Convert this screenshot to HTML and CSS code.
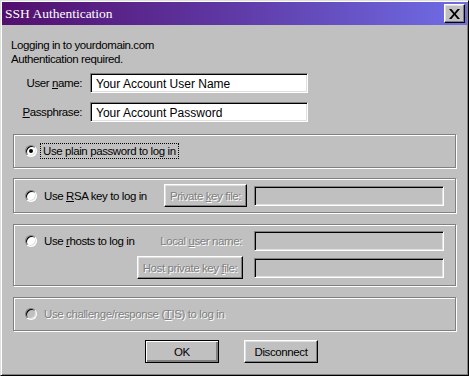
FILE: index.html
```html
<!DOCTYPE html>
<html>
<head>
  <title>SSH Authentication</title>
  <link rel="stylesheet" href="styles.css">
</head>
<body>
  <div class="window">
    <div class="titlebar">
      <span class="title">SSH Authentication</span>
      <button type="button" class="closeButton">
        <svg width="9" height="8" viewBox="0 0 9 8">
          <path d="M0 0h2l2.5 3 2.5-3h2L5.5 4 9 8H7L4.5 5 2 8H0l3.5-4z" fill="#000"/>
        </svg>
      </button>
    </div>

    <div class="content">
      <div class="intro">
        <div>Logging in to yourdomain.com</div>
        <div>Authentication required.</div>
      </div>

      <div class="fields">
        <label class="fieldLabel">User <u>n</u>ame:</label>
        <div class="textInput">Your Account User Name</div>
        <label class="fieldLabel"><u>P</u>assphrase:</label>
        <div class="textInput">Your Account Password</div>
      </div>

      <div class="groupBox single">
        <span class="radio checked"></span>
        <span class="optionLabel focused">Use plain password to log in</span>
      </div>

      <div class="groupBox grid">
        <div class="option">
          <span class="radio"></span>
          <span class="optionLabel">Use <u>R</u>SA key to log in</span>
        </div>
        <button type="button" class="winButton disabled keyButton">Private <u>k</u>ey file:</button>
        <div class="textInput empty"></div>
      </div>

      <div class="groupBox grid tall">
        <div class="option">
          <span class="radio"></span>
          <span class="optionLabel">Use <u>r</u>hosts to log in</span>
        </div>
        <span class="disabledText sideLabel">Local <u>u</u>ser name:</span>
        <div class="textInput empty"></div>
        <div></div>
        <button type="button" class="winButton disabled hostButton">Host private key <u>f</u>ile:</button>
        <div class="textInput empty"></div>
      </div>

      <div class="groupBox single">
        <span class="radio disabledRadio"></span>
        <span class="optionLabel disabledText">Use challenge/response (<u>T</u>IS) to log in</span>
      </div>

      <div class="actions">
        <button type="button" class="winButton default">OK</button>
        <button type="button" class="winButton">Disconnect</button>
      </div>
    </div>
  </div>
</body>
</html>
```

FILE: styles.css
```css
/* Win98 style dialog */
body {
  margin: 0;
  background-color: #c0c0c0;
  font-family: 'Liberation Sans', Arial, sans-serif;
  font-size: 11.5px;
  letter-spacing: -0.4px;
  color: #000;
}

.window {
  box-sizing: border-box;
  width: 469px;
  height: 376px;
  padding: 1px;
  background-color: #c0c0c0;
  border: 1px solid;
  border-color: #dfdfdf #000 #000 #dfdfdf;
  box-shadow: inset 1px 1px 0 #fff, inset -1px -1px 0 #808080;
}

.titlebar {
  display: flex;
  align-items: center;
  justify-content: space-between;
  height: 23px;
  padding: 0 2px 0 3px;
  background-image: linear-gradient(to right, #520f6d, #5e35a0 45%, #6f6de6);
}

.title {
  font-family: 'Liberation Serif', 'Times New Roman', serif;
  font-size: 13.5px;
  letter-spacing: 0;
  color: #fff;
  padding-top: 1px;
}

.closeButton {
  display: flex;
  align-items: center;
  justify-content: center;
  box-sizing: border-box;
  width: 21px;
  height: 19px;
  padding: 0;
  background-color: #c0c0c0;
  border: 1px solid;
  border-color: #fff #000 #000 #fff;
  box-shadow: inset -1px -1px 0 #808080, inset 1px 1px 0 #dfdfdf;
}

.closeButton svg {
  width: 11px;
  height: 10px;
}

.content {
  padding: 13px 11px 0 9px;
}

.intro {
  line-height: 14px;
}

.fields {
  display: grid;
  grid-template-columns: 71px 218px;
  column-gap: 8px;
  row-gap: 9px;
  align-items: center;
  margin-top: 7px;
}

.fieldLabel {
  text-align: right;
}

.textInput {
  box-sizing: border-box;
  height: 20px;
  padding: 3px 5px 0;
  background-color: #fff;
  font-size: 12px;
  letter-spacing: 0;
  border: 1px solid;
  border-color: #808080 #fff #fff #808080;
  box-shadow: inset 1px 1px 0 #000, inset -1px -1px 0 #dfdfdf;
  white-space: nowrap;
}

.textInput.empty {
  background-color: #c0c0c0;
}

.groupBox {
  box-sizing: border-box;
  width: 443px;
  margin-top: 12px;
  margin-left: 2px;
  padding: 0 11px;
  border: 1px solid #808080;
  box-shadow: inset 1px 1px 0 #fff, 1px 1px 0 #fff;
}

.groupBox.single {
  display: flex;
  align-items: center;
  height: 34px;
}

.groupBox.grid {
  display: grid;
  grid-template-columns: minmax(0, 1fr) auto 190px;
  column-gap: 7px;
  row-gap: 5px;
  align-items: center;
  height: 35px;
  margin-top: 10px;
}

.groupBox.tall {
  height: 62px;
  margin-top: 11px;
  align-content: center;
}

.groupBox.tall + .groupBox {
  margin-top: 11px;
}

.option {
  display: flex;
  align-items: center;
}

.radio {
  box-sizing: border-box;
  position: relative;
  flex: none;
  width: 12px;
  height: 12px;
  margin-right: 5px;
  border-radius: 50%;
  background-color: #fff;
  border: 1px solid;
  border-color: #808080 #fff #fff #808080;
  box-shadow: inset 1px 1px 0 #000, inset -1px -1px 0 #dfdfdf;
}

.radio.checked::after {
  content: '';
  position: absolute;
  left: 3px;
  top: 3px;
  width: 4px;
  height: 4px;
  border-radius: 50%;
  background-color: #000;
}

.radio.disabledRadio {
  background-color: #c0c0c0;
}

.optionLabel {
  padding: 1px 2px;
  white-space: nowrap;
}

.optionLabel.focused {
  outline: 1px dotted #000;
  margin-left: -1px;
}

.disabledText {
  color: #808080;
  text-shadow: 1px 1px 0 #fff;
}

.sideLabel {
  justify-self: end;
  margin-right: 5px;
}

.winButton {
  box-sizing: border-box;
  height: 23px;
  padding: 0 2px;
  background-color: #c0c0c0;
  font-family: 'Liberation Sans', Arial, sans-serif;
  font-size: 11.5px;
  letter-spacing: -0.4px;
  color: #000;
  border: 1px solid;
  border-color: #fff #000 #000 #fff;
  box-shadow: inset -1px -1px 0 #808080, inset 1px 1px 0 #dfdfdf;
  white-space: nowrap;
}

.winButton.disabled {
  color: #808080;
  text-shadow: 1px 1px 0 #fff;
}

.keyButton {
  width: 83px;
}

.hostButton {
  width: 106px;
  margin-right: 4px;
}

.actions {
  display: flex;
  justify-content: center;
  gap: 25px;
  margin-top: 9px;
  padding-right: 4px;
}

.actions .winButton {
  width: 74px;
}

.winButton.default {
  border: 1px solid #000;
  box-shadow: inset 1px 1px 0 #fff, inset -2px -2px 0 #808080, inset -1px -1px 0 #000;
}
```
